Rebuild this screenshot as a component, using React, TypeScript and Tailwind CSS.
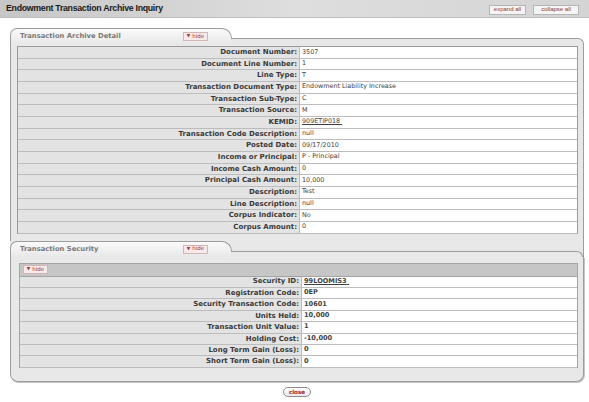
import React from 'react';

type Row = { label: string; value: string; link?: boolean };

const detailRows: Row[] = [
  { label: 'Document Number', value: '3507' },
  { label: 'Document Line Number', value: '1' },
  { label: 'Line Type', value: 'T' },
  { label: 'Transaction Document Type', value: 'Endowment Liability Increase' },
  { label: 'Transaction Sub-Type', value: 'C' },
  { label: 'Transaction Source', value: 'M' },
  { label: 'KEMID', value: '909ETIP018', link: true },
  { label: 'Transaction Code Description', value: 'null' },
  { label: 'Posted Date', value: '09/17/2010' },
  { label: 'Income or Principal', value: 'P - Principal' },
  { label: 'Income Cash Amount', value: '0' },
  { label: 'Principal Cash Amount', value: '10,000' },
  { label: 'Description', value: 'Test' },
  { label: 'Line Description', value: 'null' },
  { label: 'Corpus Indicator', value: 'No' },
  { label: 'Corpus Amount', value: '0' },
];

const securityRows: Row[] = [
  { label: 'Security ID', value: '99LOOMIS3', link: true },
  { label: 'Registration Code', value: '0EP' },
  { label: 'Security Transaction Code', value: '10601' },
  { label: 'Units Held', value: '10,000' },
  { label: 'Transaction Unit Value', value: '1' },
  { label: 'Holding Cost', value: '-10,000' },
  { label: 'Long Term Gain (Loss)', value: '0' },
  { label: 'Short Term Gain (Loss)', value: '0' },
];

function HideButton() {
  return (
    <span className="inline-flex items-center gap-[2px] h-[9px] w-[25px] justify-center border border-[#d6b4b4] bg-[#f6eaea] text-[#9b3a3a] text-[5.5px] leading-none">
      <span className="text-[4.5px]">▼</span>hide
    </span>
  );
}

function TabHeader({ title }: { title: string }) {
  return (
    <div className="flex items-end h-[16px]">
      <div className="w-[222px] h-full flex items-center rounded-tl-[7px] rounded-tr-[10px] border-t border-l border-r border-[#9c9c9c] bg-gradient-to-b from-[#fafafa] to-[#e8e8e8]">
        <span className="w-[172px] pl-[9px] text-[6.8px] font-bold text-[#7a7a7a]">{title}</span>
        <HideButton />
      </div>
      <div className="relative -ml-px flex-1 h-[6px] rounded-tr-[8px] border-t border-r border-[#9c9c9c] bg-[#e8e8e8]" />
    </div>
  );
}

function DataRow({ row, h, bold }: { row: Row; h: string; bold?: boolean }) {
  return (
    <div className={`flex border-b border-[#bcbcbc] ${h}`}>
      <div className="w-[281px] shrink-0 bg-[#e3e3e3] pr-[2px] font-bold text-[#3a3a3a] text-[7px] flex items-center justify-end">
        {row.label}:
      </div>
      <div
        className={`flex-1 bg-white border-l border-[#bcbcbc] pl-[2px] text-[#3e3e3e] flex items-center ${
          bold ? 'font-bold text-[6.6px]' : 'text-[6.4px]'
        }`}
      >
        {row.link ? <span className="underline">{row.value}&nbsp;</span> : row.value}
      </div>
    </div>
  );
}

export default function App() {
  return (
    <div className="w-[589px] h-[402px] bg-white overflow-hidden" style={{ fontFamily: '"DejaVu Sans", Verdana, sans-serif' }}>
      {/* title bar */}
      <div className="h-[18px] flex items-center justify-between pl-[6px] pr-[10px] bg-gradient-to-r from-[#c6c6c6] via-[#dedede] to-[#d4d4d4] border-b border-[#bdbdbd]">
        <span
          className="text-[8.8px] font-bold text-[#1a1a1a] tracking-[-0.3px]"
          style={{ fontFamily: '"Liberation Sans", Arial, sans-serif' }}
        >
          Endowment Transaction Archive Inquiry
        </span>
        <div className="flex gap-[7px] pt-[2px]" style={{ fontFamily: '"Liberation Sans", Arial, sans-serif' }}>
          <span className="h-[10px] w-[37px] flex items-center justify-center border border-[#b4b4b4] bg-[#f4f4f4] text-[#8c3a3a] text-[6px]">
            expand all
          </span>
          <span className="h-[10px] w-[46px] flex items-center justify-center border border-[#b4b4b4] bg-[#f4f4f4] text-[#8c3a3a] text-[6px]">
            collapse all
          </span>
        </div>
      </div>

      {/* panel */}
      <div className="ml-[10px] mt-[10px] w-[574px]">
        <TabHeader title="Transaction Archive Detail" />
        <div className="border-l border-r border-[#9c9c9c] bg-[#e8e8e8] pl-[6px] pr-[5px] pt-[2px] pb-[7px]">
          <div className="border border-[#9a9a9a] border-b-0">
            {detailRows.map((r) => (
              <DataRow key={r.label} row={r} h="h-[11.66px]" />
            ))}
          </div>
        </div>
        <div className="bg-[#e8e8e8] border-r border-[#9c9c9c]">
          <TabHeader title="Transaction Security" />
        </div>
        <div className="border-l border-r border-b border-[#9c9c9c] rounded-b-[8px] bg-[#e8e8e8] pl-[8px] pr-[5px] pt-[6px] pb-[13px] shadow-[1px_1px_0_#c4c4c4]">
          <div className="border border-[#a4a4a4] border-b-0">
            <div className="h-[13px] bg-[#c6c6c6] flex items-center pl-[3px] border-b border-[#a4a4a4]">
              <HideButton />
            </div>
            {securityRows.map((r) => (
              <DataRow key={r.label} row={r} h="h-[11.43px]" bold />
            ))}
          </div>
        </div>
      </div>

      {/* close */}
      <div className="flex justify-center mt-[5px] pl-[5px]">
        <span className="h-[10px] w-[28px] justify-center flex items-center rounded-full border border-[#8e8e8e] bg-gradient-to-b from-white to-[#e8e8e8] text-[#a02020] font-bold text-[5.6px]">
          close
        </span>
      </div>
    </div>
  );
}
